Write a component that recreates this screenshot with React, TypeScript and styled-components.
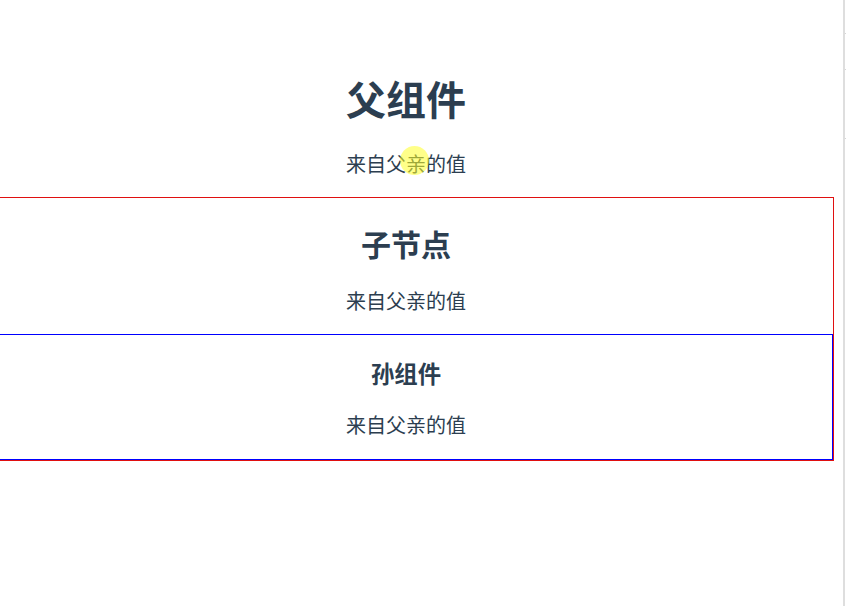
import React from "react";
import styled, { createGlobalStyle } from "styled-components";

const Global = createGlobalStyle`
  html, body { margin: 0; padding: 0; background: #fff; }
  body { font-family: "Noto Sans CJK SC", "Noto Sans", sans-serif; color: #2c3e50; }
  #root { width: 846px; height: 606px; }
`;

const Page = styled.div`
  display: flex;
  width: 846px;
  height: 606px;
  overflow: hidden;
`;

const Viewport = styled.div`
  position: relative;
  flex: 0 0 843px;
  height: 606px;
  overflow: hidden;
`;

const Rail = styled.div`
  flex: 0 0 3px;
  height: 606px;
  border-left: 2px solid #dedede;
  box-sizing: border-box;
  background:
    linear-gradient(#d6d6d6, #d6d6d6) 0 33px / 1px 1px no-repeat,
    linear-gradient(#d6d6d6, #d6d6d6) 0 69px / 1px 1px no-repeat,
    linear-gradient(#d6d6d6, #d6d6d6) 0 138px / 1px 1px no-repeat;
`;

const AppRoot = styled.div`
  display: flex;
  flex-direction: column;
  margin-left: -22px;
  width: 856px;
  padding-top: 74px;
  text-align: center;
`;

const Title = styled.h1`
  margin: 0;
  font-size: 40px;
  line-height: 48px;
  font-weight: 700;
`;

const Subtitle = styled.h2`
  margin: 0;
  font-size: 30px;
  line-height: 36px;
  font-weight: 700;
`;

const Small = styled.h3`
  margin: 0;
  font-size: 23.4px;
  line-height: 28px;
  font-weight: 700;
`;

const Text = styled.p<{ $top: number; $bottom?: number }>`
  margin: ${(p) => p.$top}px 0 ${(p) => p.$bottom ?? 0}px;
  font-size: 20px;
  line-height: 28px;
  font-weight: 400;
`;

const ChildBox = styled.section`
  display: flex;
  flex-direction: column;
  margin-top: 19px;
  border: 1px solid #e01010;
  padding-top: 27px;
`;

const GrandBox = styled.section`
  display: flex;
  flex-direction: column;
  margin-top: 19px;
  border: 1px solid #0000ff;
  padding-top: 24px;
`;

const Cursor = styled.div`
  position: absolute;
  left: 400px;
  top: 146px;
  width: 29px;
  height: 29px;
  border-radius: 50%;
  background: rgba(255, 255, 40, 0.55);
  pointer-events: none;
`;

export default function App() {
  return (
    <>
      <Global />
      <Page>
        <Viewport>
          <AppRoot>
            <Title>父组件</Title>
            <Text $top={28}>来自父亲的值</Text>
            <ChildBox>
              <Subtitle>子节点</Subtitle>
              <Text $top={26}>来自父亲的值</Text>
              <GrandBox>
                <Small>孙组件</Small>
                <Text $top={24} $bottom={20}>来自父亲的值</Text>
              </GrandBox>
            </ChildBox>
          </AppRoot>
          <Cursor />
        </Viewport>
        <Rail />
      </Page>
    </>
  );
}
